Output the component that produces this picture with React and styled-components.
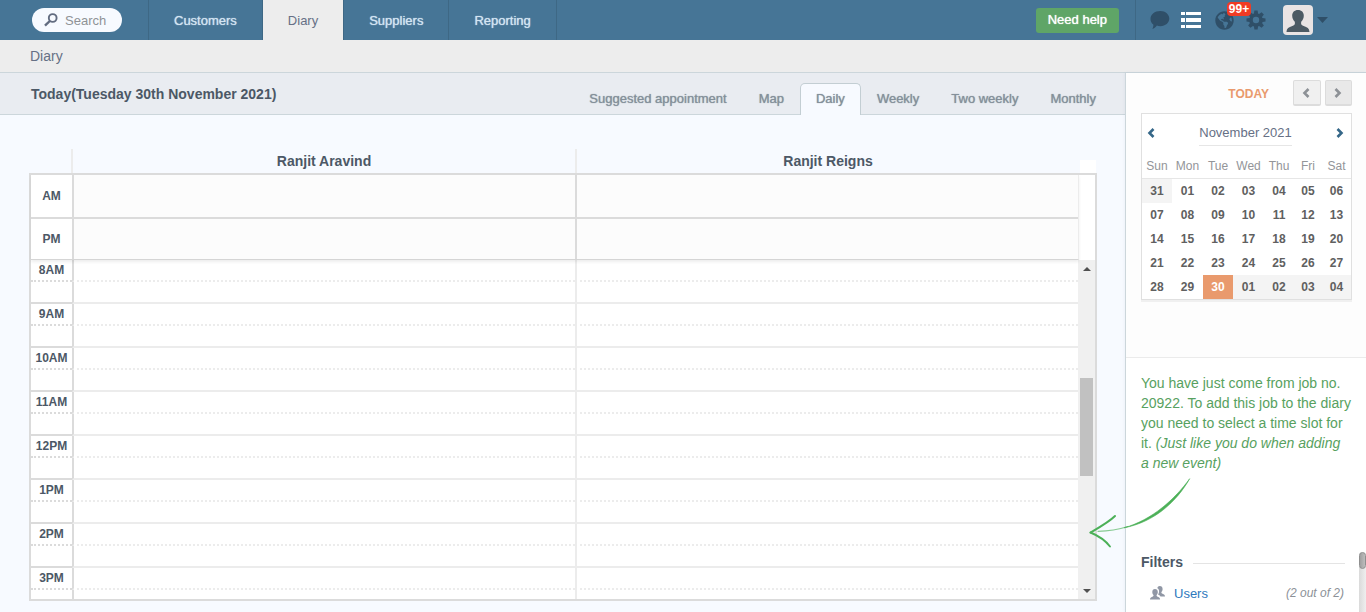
import React from "react";
import styled, { createGlobalStyle, css } from "styled-components";
import { FaGlobeAmericas } from "react-icons/fa";

const c = {
  blue: "#467596",
  blueLine: "#3e6885",
  blueDark: "#2f4f68",
  line: "#ccd6db",
  ink: "#4c5866",
  slate: "#667085",
  grid: "#dbdbdb",
  gridSoft: "#ececec",
  green: "#5fa567",
  orange: "#e99a6d",
};

const GlobalStyle = createGlobalStyle`
  *, *::before, *::after { box-sizing: border-box; }
  body { margin: 0; font-family: "Liberation Sans", Arial, sans-serif; font-size: 13px; color: ${c.ink}; background: #f7faff; }
  button, input { font: inherit; margin: 0; }
  a { text-decoration: none; color: inherit; }
`;

const semibold = css`
  text-shadow: 0 0 1px currentColor;
`;

const Page = styled.div`
  display: flex;
  flex-direction: column;
  height: 100vh;
  overflow: hidden;
`;

/* ---------- top bar ---------- */
const TopBar = styled.header`
  display: flex;
  flex: none;
  height: 40px;
  background: ${c.blue};
`;

const SearchArea = styled.form`
  padding: 8px 26px 8px 32px;
  border-right: 1px solid ${c.blueLine};
`;

const SearchPill = styled.label`
  display: flex;
  align-items: center;
  gap: 7px;
  width: 90px;
  height: 24px;
  padding: 0 12px;
  border-radius: 12px;
  background: #f7faff;
`;

const SearchIcon = styled.svg`
  flex: none;
`;

const SearchInput = styled.input`
  width: 50px;
  flex: none;
  padding: 0;
  border: 0;
  outline: 0;
  background: transparent;
  &::placeholder { color: #8f9296; opacity: 1; }
`;

const Nav = styled.nav`
  display: flex;
  flex: 1;
`;

const NavLink = styled.a`
  display: flex;
  align-items: center;
  padding: 0 25px;
  border-right: 1px solid ${c.blueLine};
  color: ${(p) => (p.$active ? c.slate : "#d3e4f2")};
  background: ${(p) => (p.$active ? "#ededed" : "transparent")};
  ${(p) => !p.$active && semibold}
`;

const HelpArea = styled.div`
  display: flex;
  align-items: center;
  padding-right: 16px;
  border-right: 1px solid ${c.blueLine};
`;

const HelpButton = styled.button`
  height: 25px;
  padding: 0 12px;
  border: 0;
  border-radius: 3px;
  background: ${c.green};
  color: #fff;
  line-height: 24px;
  ${semibold}
`;

const Tools = styled.div`
  display: flex;
  align-items: center;
  padding: 0 38px 0 14px;
`;

const IconButton = styled.button`
  position: relative;
  display: flex;
  align-items: center;
  justify-content: center;
  width: ${(p) => p.$w}px;
  height: 40px;
  padding: 0;
  border: 0;
  background: none;
  color: ${(p) => (p.$bright ? "#fff" : c.blueDark)};
`;

const Badge = styled.span`
  position: absolute;
  z-index: 1;
  top: 2px;
  left: 15px;
  width: 24px;
  height: 14px;
  border-radius: 4px;
  background: #f03b24;
  color: #fff;
  font-size: 12px;
  font-weight: bold;
  line-height: 14px;
  text-align: center;
`;

const AccountButton = styled.button`
  display: flex;
  align-items: center;
  gap: 4px;
  padding: 0;
  margin-left: 7px;
  border: 0;
  background: none;
`;

const Avatar = styled.span`
  width: 30px;
  height: 30px;
  border-radius: 4px;
  overflow: hidden;
  background: #e9e4e4;
`;

const Crumbs = styled.div`
  flex: none;
  height: 33px;
  padding: 0 30px;
  border-bottom: 1px solid ${c.line};
  background: #ededed;
  color: ${c.slate};
  font-size: 14px;
  line-height: 32px;
`;

/* ---------- diary ---------- */
const Content = styled.div`
  display: flex;
  flex: 1;
  min-height: 0;
`;

const Main = styled.main`
  display: flex;
  flex-direction: column;
  flex: 1;
  min-width: 0;
`;

const TitleBar = styled.div`
  display: flex;
  justify-content: space-between;
  flex: none;
  height: 42px;
  padding: 0 13px 0 31px;
  border-bottom: 1px solid ${c.line};
  background: #e9ecf1;
`;

const Title = styled.h1`
  margin: 0;
  font-size: 14px;
  line-height: 42px;
`;

const Tabs = styled.nav`
  display: flex;
  height: 32px;
  margin-top: 10px;
`;

const Tab = styled.a`
  padding: 0 15px;
  border: 1px solid ${(p) => (p.$active ? "#c3ced3" : "transparent")};
  border-bottom: 0;
  border-radius: 5px 5px 0 0;
  background: ${(p) => (p.$active ? "#f7faff" : "transparent")};
  color: #84909a;
  line-height: 30px;
  ${semibold}
`;

const Schedule = styled.section`
  display: flex;
  flex-direction: column;
  flex: 1;
  min-height: 0;
  padding: 34px 28px 11px 29px;
`;

const People = styled.div`
  display: grid;
  grid-template-columns: 42px 1fr 1fr 18px;
  flex: none;
  height: 24px;
`;

const Person = styled.h2`
  margin: 0;
  border-left: 2px solid ${c.gridSoft};
  font-size: 14px;
  line-height: 24px;
  text-align: center;
`;

const Corner = styled.span`
  grid-column: 4;
  margin: 11px 1px 0;
  background: #fff;
`;

const Frame = styled.div`
  display: flex;
  flex-direction: column;
  flex: 1;
  min-height: 0;
  border: 2px solid ${c.grid};
  background: #fff;
`;

const SlotTable = styled.table`
  display: block;
  tbody { display: block; }
`;

const AllDay = styled(SlotTable)`
  position: relative;
  flex: none;
  margin-right: 16px;
  border-right: 1px solid ${c.gridSoft};
  border-bottom: 1px solid #d5d5d5;
  box-shadow: 0 2px 3px rgba(0, 0, 0, 0.07);
`;

const AllDayRow = styled.tr`
  display: grid;
  grid-template-columns: 41px 1fr 1fr;
  height: ${(p) => (p.$last ? 40 : 44)}px;
  border-bottom: ${(p) => (p.$last ? "0" : `2px solid ${c.grid}`)};
  line-height: ${(p) => (p.$last ? 40 : 42)}px;
  td { padding: 0; border-left: 2px solid ${c.grid}; background: #fcfcfc; }
`;

const SlotLabel = styled.th`
  padding: 0;
  font-size: 12px;
  text-align: center;
`;

const Scroller = styled.div`
  display: flex;
  flex: 1;
  min-height: 0;
  overflow: hidden;
`;

const Hours = styled(SlotTable)`
  flex: 1;
`;

const HalfHour = styled.tr`
  display: grid;
  grid-template-columns: 41px 1fr 1fr;
  height: 22px;
  line-height: 20px;
  > * { border-bottom: 2px ${(p) => (p.$half ? "dotted" : "solid")} ${c.gridSoft}; }
  > td { padding: 0; border-left: 2px solid ${c.gridSoft}; }
  > th { border-bottom-color: ${c.grid}; }
  > th + td { border-left-color: ${c.grid}; }
`;

const ScrollTrack = styled.div`
  display: grid;
  grid-template-rows: 17px 101fr 98fr 106fr 17px;
  justify-items: center;
  align-items: center;
  width: 17px;
  background: #f0f0f0;
`;

const ScrollThumb = styled.span`
  grid-row: 3;
  align-self: stretch;
  width: 13px;
  background: #c1c1c1;
`;

const ScrollArrow = styled.svg`
  grid-row: ${(p) => p.$row};
`;

/* ---------- side panel ---------- */
const Side = styled.aside`
  position: relative;
  display: flex;
  flex-direction: column;
  flex: none;
  width: 241px;
  border-left: 1px solid ${c.line};
  background: #fff;
  box-shadow: 0 0 3px rgba(80, 110, 140, 0.1);
`;

const CalendarArea = styled.section`
  padding: 7px 14px 57px 15px;
  border-bottom: 1px solid #ebebeb;
  background: #fdfdfd;
`;

const DayNav = styled.div`
  display: flex;
  align-items: center;
  justify-content: flex-end;
  gap: 4px;
  margin-bottom: 7px;
`;

const TodayButton = styled.button`
  margin-right: 20px;
  padding: 2px 0 0;
  border: 0;
  background: none;
  color: ${c.orange};
  font-size: 12px;
  font-weight: bold;
`;

const StepButton = styled.button`
  display: flex;
  align-items: center;
  justify-content: center;
  width: ${(p) => (p.$next ? 27 : 28)}px;
  height: 26px;
  padding: 0 2px 0 0;
  border: 1px solid #dcdcdc;
  border-bottom-width: 2px;
  border-radius: 2px;
  background: ${(p) => (p.$next ? "#e9e9e9" : "#f0f0f0")};
  color: #8d9196;
`;

const Calendar = styled.div`
  border: 1px solid #e0e0e0;
  background: #fff;
  box-shadow: 0 2px 0 #f0f0f0;
`;

const MonthRow = styled.div`
  display: flex;
  align-items: flex-start;
  justify-content: space-between;
  height: 40px;
  padding: 6px 7px 0 5px;
`;

const Month = styled.h2`
  margin: 0;
  padding: 0;
  border-bottom: 1px solid #e6e6e6;
  color: ${c.slate};
  font-size: 13px;
  font-weight: normal;
  line-height: 25px;
`;

const MonthButton = styled.button`
  display: flex;
  align-items: center;
  height: 26px;
  padding: 0;
  border: 0;
  background: none;
  color: #356788;
`;

const Dates = styled.table`
  width: 100%;
  table-layout: fixed;
  border-collapse: separate;
  border-spacing: 0;
  text-align: center;
`;

const Weekday = styled.th`
  width: ${(p) => p.$w}px;
  height: 25px;
  padding: 0;
  border-bottom: 1px solid #e6e6e6;
  color: #939599;
  font-size: 12px;
  font-weight: normal;
`;

const DateCell = styled.td`
  height: 24px;
  padding: 0;
  background: ${(p) => (p.$today ? c.orange : p.$outside ? "#f4f4f4" : "#fff")};
  color: ${(p) => (p.$today ? "#fff" : "#606060")};
  font-size: 12px;
  font-weight: bold;
  line-height: 24px;
`;

const Hint = styled.p`
  margin: 0;
  padding: 15px 15px 0;
  color: #57a160;
  font-size: 14px;
  line-height: 20px;
`;

const HintArrow = styled.svg`
  position: absolute;
  z-index: 2;
  left: -40px;
  top: 402px;
  pointer-events: none;
`;

const Filters = styled.section`
  display: flex;
  flex: 1;
  margin-top: 79px;
  min-height: 60px;
`;

const FilterBody = styled.div`
  flex: 1;
  padding: 0 14px 0 15px;
`;

const FilterTitle = styled.h2`
  display: flex;
  align-items: center;
  gap: 10px;
  margin: 0;
  font-size: 14px;
  line-height: 20px;
  &::after { content: ""; flex: 1; height: 1px; margin-top: 3px; background: #e4e4e4; }
`;

const FilterRow = styled.div`
  display: flex;
  align-items: center;
  gap: 9px;
  height: 24px;
  margin-top: 9px;
  padding-left: 9px;
`;

const FilterLink = styled.a`
  flex: 1;
  color: #2d79bd;
`;

const FilterCount = styled.em`
  margin-right: 1px;
  color: #8c9197;
  font-size: 12px;
`;

const SideTrack = styled.div`
  width: 7px;
  height: 100px;
  border-radius: 4px;
  background: linear-gradient(90deg, #dadada, #efefef);
`;

const SideThumb = styled.div`
  height: 17px;
  border-radius: 4px;
  border: 1px solid #8f8f8f;
  background: linear-gradient(90deg, #a0a0a0, #bdbdbd);
`;

const Chevron = ({ next }) => (
  <svg width="8" height="10" viewBox="0 0 8 10" fill="none" stroke="currentColor" strokeWidth="2.6" aria-hidden="true">
    <path d={next ? "M1.5 1 5.5 5 1.5 9" : "M6.5 1 2.5 5 6.5 9"} />
  </svg>
);

const Gear = () => (
  <svg width="20" height="20" viewBox="-10 -10 20 20" fill="currentColor" aria-hidden="true">
    <circle r="5" fill="none" stroke="currentColor" strokeWidth="3.6" />
    {[0, 45, 90, 135, 180, 225, 270, 315].map((a) => (
      <path key={a} d="M-2.200-5.500-1.600-9.500H1.600L2.200-5.500z" transform={`rotate(${a})`} />
    ))}
  </svg>
);

const tabs = ["Suggested appointment", "Map", "Daily", "Weekly", "Two weekly", "Monthly"];
const hours = ["8AM", "9AM", "10AM", "11AM", "12PM", "1PM", "2PM", "3PM"];
const weekdays = [["Sun", 30], ["Mon", 31], ["Tue", 30], ["Wed", 31], ["Thu", 30], ["Fri", 28], ["Sat", 29]];
const weeks = [
  ["31", "01", "02", "03", "04", "05", "06"],
  ["07", "08", "09", "10", "11", "12", "13"],
  ["14", "15", "16", "17", "18", "19", "20"],
  ["21", "22", "23", "24", "25", "26", "27"],
  ["28", "29", "30", "01", "02", "03", "04"],
];
const isOutside = (w, d) => (w === 0 && d === 0) || (w === 4 && d > 2);

export default function App() {
  return (
    <Page>
      <GlobalStyle />
      <TopBar>
        <SearchArea>
          <SearchPill>
            <SearchIcon width="14" height="14" viewBox="0 0 14 14" fill="none" stroke="#626c80" aria-hidden="true">
              <circle cx="8.7" cy="5" r="3.9" strokeWidth="1.9" />
              <path d="M5.8 8 1 12.600" strokeWidth="2.4" />
            </SearchIcon>
            <SearchInput type="text" placeholder="Search" aria-label="Search" />
          </SearchPill>
        </SearchArea>
        <Nav>
          {["Customers", "Diary", "Suppliers", "Reporting"].map((n) => (
            <NavLink key={n} href="#" $active={n === "Diary"}>{n}</NavLink>
          ))}
        </Nav>
        <HelpArea><HelpButton type="button">Need help</HelpButton></HelpArea>
        <Tools>
          <IconButton $w={20} aria-label="Messages">
            <svg width="20" height="18" viewBox="0 0 20 18" fill="currentColor" aria-hidden="true">
              <path d="M10.300 0C15.600 0 19.300 3.500 19.300 7.600c0 4.300-3.900 7.600-8.900 7.600-1.400 0-2.500-.2-3.500-.6C5.600 16.300 4 17.600 2.300 18c.8-1.300 1.200-2.800 1-4.400C1.400 12.200.5 10.200.5 8 .5 3.500 4.700 0 10.300 0Z" />
            </svg>
          </IconButton>
          <IconButton $w={42} $bright aria-label="List">
            <svg width="20" height="18" viewBox="0 0 20 18" fill="currentColor" aria-hidden="true">
              <path d="M0 1h4v3H0zM5 1h15v3H5zM0 7h4v4H0zM5 7h15v4H5zM0 14h4v3H0zM5 14h15v3H5z" />
            </svg>
          </IconButton>
          <IconButton $w={24} aria-label="Notifications">
            <FaGlobeAmericas size={19} />
            <Badge>99+</Badge>
          </IconButton>
          <IconButton $w={40} aria-label="Settings"><Gear /></IconButton>
          <AccountButton aria-label="Account">
            <Avatar>
              <svg width="30" height="30" viewBox="0 0 30 30" fill="#4c5a64" aria-hidden="true">
                <path d="M15 5c3.600 0 5.800 2.300 5.800 5.800 0 2.300-1 4.500-2.600 5.900-.4 2.300 0 3.400 2.400 4.200 3.700 1.300 5.600 2 5.900 6.100H3.500c.3-4.100 2.200-4.800 5.900-6.100 2.400-.8 2.800-1.900 2.400-4.200-1.600-1.400-2.600-3.600-2.600-5.900C9.200 7.300 11.400 5 15 5Z" />
              </svg>
            </Avatar>
            <svg width="11" height="6" viewBox="0 0 11 6" fill={c.blueDark} aria-hidden="true"><path d="M0 0h11L5.500 6z" /></svg>
          </AccountButton>
        </Tools>
      </TopBar>
      <Crumbs>Diary</Crumbs>

      <Content>
        <Main>
          <TitleBar>
            <Title>Today(Tuesday 30th November 2021)</Title>
            <Tabs>
              {tabs.map((t) => <Tab key={t} href="#" $active={t === "Daily"}>{t}</Tab>)}
            </Tabs>
          </TitleBar>
          <Schedule>
            <People>
              <span />
              <Person>Ranjit Aravind</Person>
              <Person>Ranjit Reigns</Person>
              <Corner />
            </People>
            <Frame>
              <AllDay cellSpacing="0">
                <tbody>
                  <AllDayRow><SlotLabel scope="row">AM</SlotLabel><td /><td /></AllDayRow>
                  <AllDayRow $last><SlotLabel scope="row">PM</SlotLabel><td /><td /></AllDayRow>
                </tbody>
              </AllDay>
              <Scroller>
                <Hours cellSpacing="0">
                  <tbody>
                    {hours.map((h) => (
                      <React.Fragment key={h}>
                        <HalfHour $half><SlotLabel scope="row">{h}</SlotLabel><td /><td /></HalfHour>
                        <HalfHour><SlotLabel /><td /><td /></HalfHour>
                      </React.Fragment>
                    ))}
                  </tbody>
                </Hours>
                <ScrollTrack aria-hidden="true">
                  <ScrollArrow $row={1} width="8" height="4" viewBox="0 0 8 4" fill="#505050"><path d="M4 0 8 4H0z" /></ScrollArrow>
                  <ScrollThumb />
                  <ScrollArrow $row={5} width="8" height="4" viewBox="0 0 8 4" fill="#505050"><path d="M0 0h8L4 4z" /></ScrollArrow>
                </ScrollTrack>
              </Scroller>
            </Frame>
          </Schedule>
        </Main>

        <Side>
          <CalendarArea>
            <DayNav>
              <TodayButton type="button">TODAY</TodayButton>
              <StepButton type="button" aria-label="Previous day"><Chevron /></StepButton>
              <StepButton type="button" $next aria-label="Next day"><Chevron next /></StepButton>
            </DayNav>
            <Calendar>
              <MonthRow>
                <MonthButton type="button" aria-label="Previous month"><Chevron /></MonthButton>
                <Month>November 2021</Month>
                <MonthButton type="button" aria-label="Next month"><Chevron next /></MonthButton>
              </MonthRow>
              <Dates>
                <thead>
                  <tr>{weekdays.map(([d, w]) => <Weekday key={d} $w={w} scope="col">{d}</Weekday>)}</tr>
                </thead>
                <tbody>
                  {weeks.map((week, w) => (
                    <tr key={w}>
                      {week.map((day, d) => (
                        <DateCell key={d} $today={day === "30"} $outside={isOutside(w, d)}>{day}</DateCell>
                      ))}
                    </tr>
                  ))}
                </tbody>
              </Dates>
            </Calendar>
          </CalendarArea>
          <Hint>
            You have just come from job no. 20922. To add this job to the diary you need to select a time slot for it.{" "}
            <em>(Just like you do when adding a&nbsp;new event)</em>
          </Hint>
          <HintArrow width="108" height="76" viewBox="0 0 108 76" fill="none" stroke="#4cb058" strokeLinecap="round" aria-hidden="true">
            <path d="M103.500 4C91 26 69 47 38 52.800 66 45 89 24 103.500 4Z" fill="#4cb058" strokeWidth=".6" />
            <path d="M42 51.500C34 54 26 56 12 56.300" strokeWidth="1.200" opacity=".65" />
            <path d="M29 41C23 47 14 52 4.500 57.500" strokeWidth="2" />
            <path d="M4.500 57.500C13 61 19 65 24 71.500" strokeWidth="1.900" />
          </HintArrow>
          <Filters>
            <FilterBody>
              <FilterTitle>Filters</FilterTitle>
              <FilterRow>
                <svg width="15" height="14" viewBox="0 0 15 14" fill="#9097a5" aria-hidden="true">
                  <path d="M9.800 0c1.800 0 2.800 1.300 2.800 3 0 1.300-.5 2.300-1.200 3-.1 1 .2 1.400 1.200 1.800 1.400.5 2.400 1 2.400 2.700H10.500C9.900 9.500 9 9 7.900 8.600c.9-1.200 1.300-2.500 1.100-4.100C8.800 3.300 8.200 2.600 7.300 2.200 7.600.8 8.500 0 9.800 0Z" />
                  <path d="M5 3c1.800 0 2.800 1.300 2.800 3 0 1.300-.5 2.300-1.200 3-.1 1 .2 1.400 1.200 1.800 1.400.5 2.300 1 2.300 2.700H0c0-1.700.9-2.200 2.300-2.700 1-.4 1.300-.8 1.200-1.800-.7-.7-1.200-1.700-1.200-3C2.300 4.300 3.300 3 5 3Z" />
                </svg>
                <FilterLink href="#">Users</FilterLink>
                <FilterCount>(2 out of 2)</FilterCount>
              </FilterRow>
            </FilterBody>
            <SideTrack aria-hidden="true"><SideThumb /></SideTrack>
          </Filters>
        </Side>
      </Content>
    </Page>
  );
}
